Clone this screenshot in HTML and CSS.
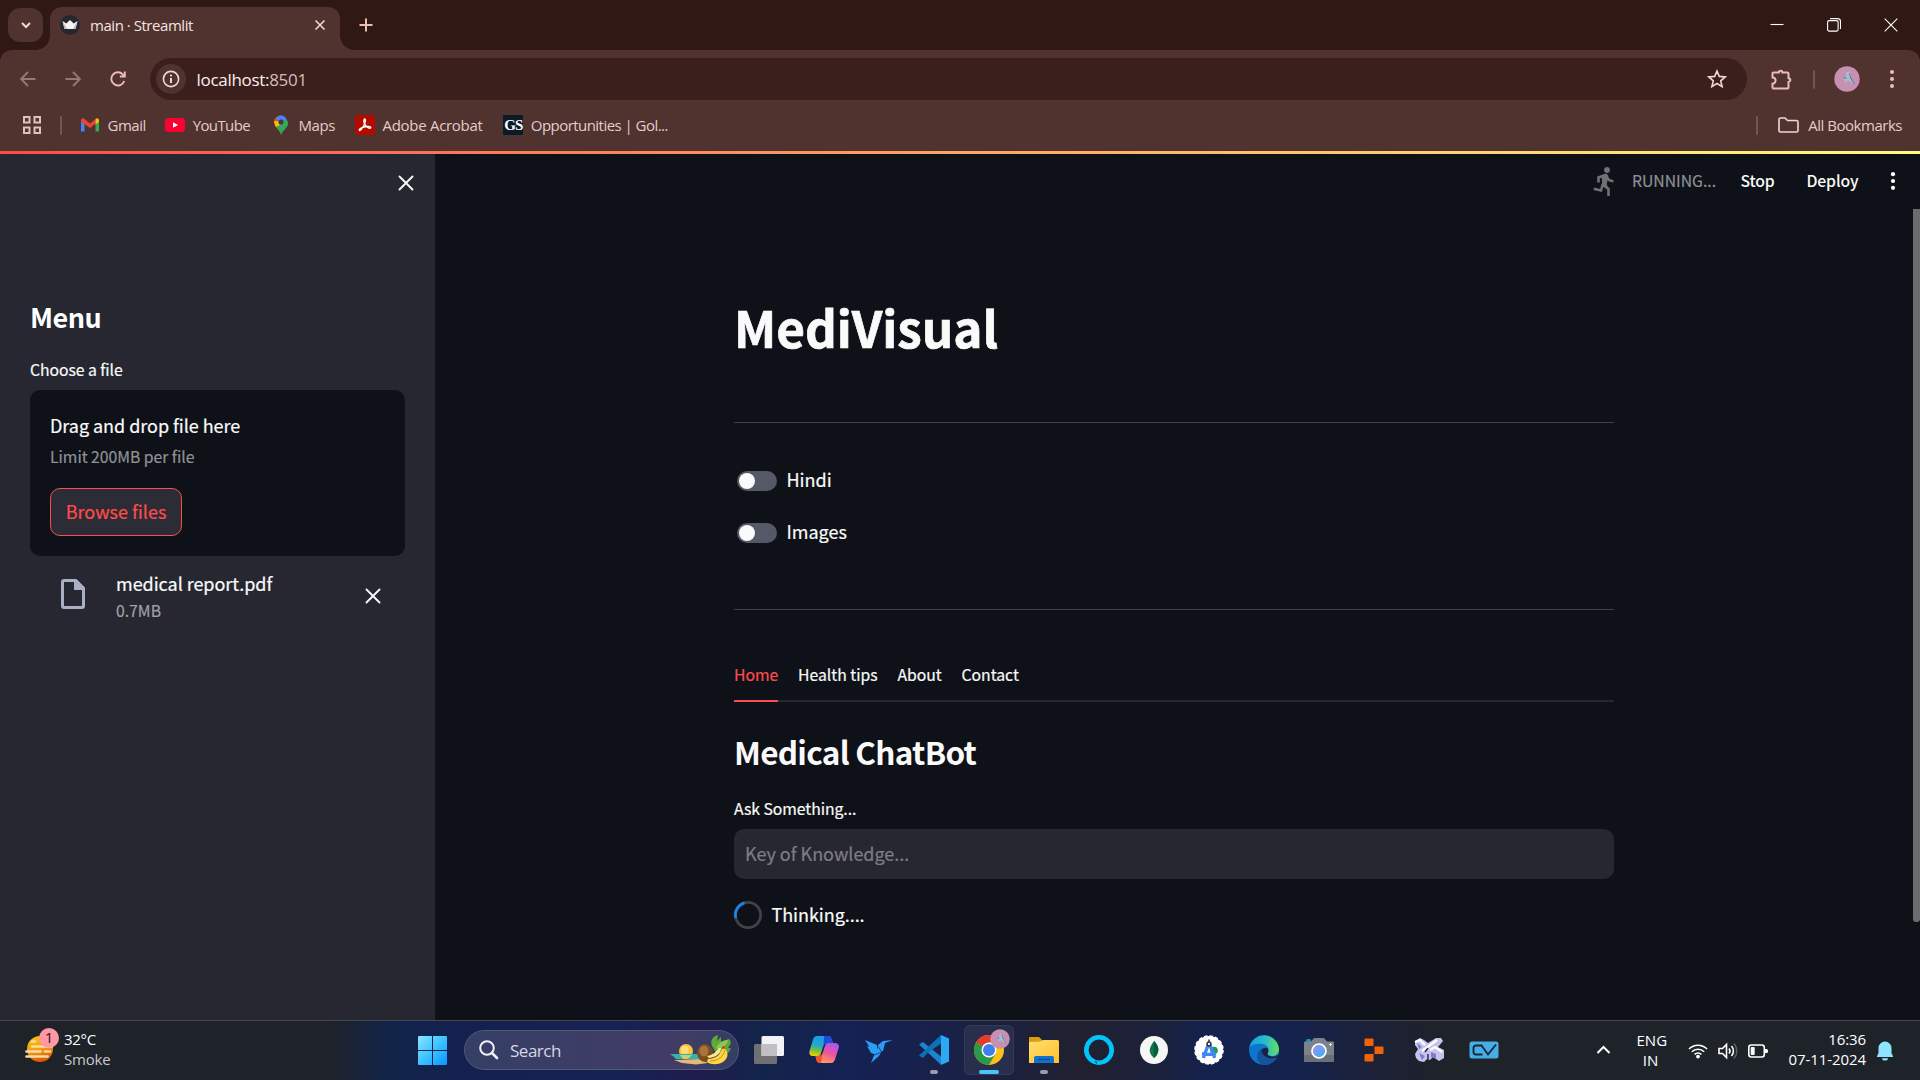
FILE: index.html
```html
<!DOCTYPE html>
<html lang="en">
<head>
<meta charset="utf-8">
<title>main · Streamlit</title>
<link rel="stylesheet" href="styles.css">
</head>
<body>
<header class="browser">
  <div class="tabstrip">
    <button class="tab-search"><svg width="12" height="12" viewBox="0 0 12 12"><path d="M2 4l4 4 4-4" class="ln-light w2"/></svg></button>
    <div class="tab">
      <svg class="favicon" width="20" height="20" viewBox="0 0 20 20"><circle cx="10" cy="10" r="10" fill="#262730"/><path d="M2.500 6l3.800 2.600L10 5l3.700 3.600L17.500 6l-2 8h-11z" fill="#f4f4f4"/><path d="M2.500 6l4.500 8H4.500z M17.500 6L13 14h2.500z" fill="#bbb"/></svg>
      <span class="tab-title">main · Streamlit</span>
      <svg class="tab-close" width="12" height="12" viewBox="0 0 12 12"><path d="M1.500 1.500l9 9m0-9l-9 9" class="ln-light w15"/></svg>
    </div>
    <svg class="new-tab" width="14" height="14" viewBox="0 0 14 14"><path d="M7 .5v13M.5 7h13" class="ln-pink w2"/></svg>
    <div class="window-controls">
      <svg width="14" height="14" viewBox="0 0 14 14"><path d="M.5 6.500h13" class="ln-white w1"/></svg>
      <svg width="14" height="14" viewBox="0 0 14 14"><rect x=".6" y="2.600" width="10.500" height="10.500" rx="1.500" class="ln-white w1"/><path d="M3 .6h7.500a3 3 0 0 1 3 3V11" class="ln-white w1"/></svg>
      <svg width="14" height="14" viewBox="0 0 14 14"><path d="M.7.7l12.600 12.600m0-12.600L.7 13.300" class="ln-white w1"/></svg>
    </div>
  </div>
  <div class="toolbar">
    <svg class="nav dim" width="16" height="16" viewBox="0 0 16 16"><path d="M15.500 8H1.500M8 1L1 8l7 7" /></svg>
    <svg class="nav dim" width="16" height="16" viewBox="0 0 16 16"><path d="M.5 8h14M8 1l7 7-7 7"/></svg>
    <svg class="nav" width="16" height="16" viewBox="0 0 16 16"><path d="M14.200 10A6.600 6.600 0 1 1 12.800 3.400L14.500 5.200M14.800.5v5h-5"/></svg>
    <div class="omnibox">
      <span class="site-info"><svg width="18" height="18" viewBox="0 0 18 18"><circle cx="9" cy="9" r="7.600" class="ln-light w15"/><path d="M9 8v5" class="ln-light w2"/><circle cx="9" cy="5.500" r="1.100" fill="#ecdad7"/></svg></span>
      <span class="url">localhost:<i>8501</i></span>
      <svg class="star" width="20" height="20" viewBox="0 0 20 20"><path d="M10 2l2.300 5.400 5.900.5-4.500 3.900 1.400 5.800L10 14.500l-5.100 3.100 1.400-5.800L1.800 7.900l5.900-.5z" class="ln-light w15"/></svg>
    </div>
    <svg class="puzzle" width="21" height="21" viewBox="0 0 21 21"><path d="M3.500 3.500H7.800A1.800 1.800 0 0 1 11.400 3.500H16.500a1 1 0 0 1 1 1V9.300A1.800 1.800 0 0 1 17.500 12.900V18.500a1 1 0 0 1-1 1H2.500a1 1 0 0 1-1-1V14.700A3 3 0 0 0 1.500 8.500V4.500a1 1 0 0 1 1-1z" class="ln-pink w2"/></svg>
    <span class="divider thin"></span>
    <svg class="avatar" width="26" height="26" viewBox="0 0 26 26"><use href="#unicorn"/></svg>
    <svg class="kebab" width="4" height="18" viewBox="0 0 4 18"><g fill="#ecbdb6"><circle cx="2" cy="2" r="2"/><circle cx="2" cy="9" r="2"/><circle cx="2" cy="16" r="2"/></g></svg>
  </div>
  <nav class="bookmarks">
    <svg class="apps" width="18" height="18" viewBox="0 0 18 18"><path d="M1 1h5.500v5.500H1zM11.500 1H17v5.500h-5.500zM1 11.500h5.500V17H1zM11.500 11.500H17V17h-5.500z" class="ln-tan w2"/></svg>
    <span class="divider"></span>
    <a class="bm w38"><svg width="20" height="20" viewBox="0 0 20 20"><path d="M1 5v11.500h3.500V8z" fill="#4285f4"/><path d="M19 5v11.500h-3.500V8z" fill="#34a853"/><path d="M1 5.500A2 2 0 0 1 4.500 4L10 8.500 15.500 4v4.700L10 13 1 6.500z" fill="#ea4335"/><path d="M15.500 4A2 2 0 0 1 19 5.500V7l-3.500 2.500z" fill="#fbbc04"/></svg><span>Gmail</span></a>
    <a class="bm w58"><svg width="20" height="20" viewBox="0 0 20 20"><rect y="3" width="20" height="14" rx="3.500" fill="#ff0033"/><path d="M8 7.200v5.600l5-2.800z" fill="#fff"/></svg><span>YouTube</span></a>
    <a class="bm w36"><svg width="20" height="20" viewBox="0 0 20 20"><path d="M10 20c-1-4-3-5-5-8l9-9c4 3 4 7 1 10-2 2.500-4 4-5 7z" fill="#34a853"/><path d="M5 12C3 9 2.500 6.500 4 4l4.500 3z" fill="#fbbc04"/><path d="M3.500 4.500A7 7 0 0 1 12 .8L7.500 6.500z" fill="#ea4335"/><path d="M8 .8a7 7 0 0 1 7.500 3.200L9 11 4 4z" fill="#4285f4"/><path d="M3.300 6a7 7 0 0 1 .9-2.700l4 3.500z" fill="#ea4335"/><path d="M3.300 6.500l4-.5 1.500 4L5 12z" fill="#fbbc04"/><circle cx="10" cy="7" r="2.500" fill="#50322f"/></svg><span>Maps</span></a>
    <a class="bm w100"><svg width="20" height="20" viewBox="0 0 20 20"><rect width="20" height="20" rx="3" fill="#b30b00"/><path d="M9.500 4c1.800 0 .8 4-1 7-1 2-2.500 4.500-4 4.500-1.500-1.500 4-4 9-4 4 .2 2 2.500 0 1.500-3-1.500-6-6.500-4-9z" fill="none" stroke="#fff" stroke-width="1.300"/></svg><span>Adobe Acrobat</span></a>
    <a class="bm w137"><b class="gs">GS</b><span>Opportunities | Gol...</span></a>
    <span class="divider end"></span>
    <a class="all"><svg width="21" height="16" viewBox="0 0 21 16"><path d="M1 2.500A1.500 1.500 0 0 1 2.500 1H7l2.500 2.500h9A1.500 1.500 0 0 1 20 5v8.500a1.500 1.500 0 0 1-1.500 1.500h-16A1.500 1.500 0 0 1 1 13.500z" class="ln-light w15"/></svg><span>All Bookmarks</span></a>
  </nav>
</header>
<div class="decoration"></div>

<div class="app">
  <aside class="sidebar">
    <svg class="x side-close" width="16" height="16" viewBox="0 0 16 16"><path d="M1.500 1.500l13 13m0-13l-13 13"/></svg>
    <h2 class="menu-title">Menu</h2>
    <label class="choose">Choose a file</label>
    <section class="dropzone">
      <p class="drag">Drag and drop file here</p>
      <p class="limit">Limit 200MB per file</p>
      <button class="browse">Browse files</button>
    </section>
    <div class="file">
      <svg class="doc" width="24" height="30" viewBox="0 0 24 30"><path d="M3 0H15.500L24 8.500V27a3 3 0 0 1-3 3H3a3 3 0 0 1-3-3V3a3 3 0 0 1 3-3zM3 3V27H21V11H13V3z" fill="#aab0c4" fill-rule="evenodd"/></svg>
      <div class="file-text"><p class="name">medical report.pdf</p><p class="size">0.7MB</p></div>
      <svg class="x" width="16" height="16" viewBox="0 0 16 16"><path d="M1.500 1.500l13 13m0-13l-13 13"/></svg>
    </div>
  </aside>

  <main class="main">
    <div class="app-header">
      <svg class="runner" width="22" height="30" viewBox="0 0 22 30"><circle cx="14" cy="3" r="2.900" fill="#707176"/><path d="M12.500 8L5.500 10.500V15.500M12.500 8L10 18l5.500 4V29M13.500 9.500c1 3 3 4.500 7 4.700M9.800 17L8 23.500.8 21.800" fill="none" stroke="#707176" stroke-width="2.600"/><path d="M8.500 8.500l5-2 2 2.500-1.800 8 1.300 3.500-5.500-2z" fill="#707176"/></svg>
      <span class="running">RUNNING...</span>
      <span class="stop">Stop</span>
      <span class="deploy">Deploy</span>
      <svg class="dots" width="6" height="18" viewBox="0 0 6 18"><g fill="#fff"><circle cx="3" cy="2.200" r="2.100"/><circle cx="3" cy="9" r="2.100"/><circle cx="3" cy="15.800" r="2.100"/></g></svg>
    </div>
    <div class="content">
      <h1>MediVisual</h1>
      <hr class="hr1">
      <div class="toggle-row"><span class="toggle"></span><span class="tl">Hindi</span></div>
      <div class="toggle-row second"><span class="toggle"></span><span class="tl">Images</span></div>
      <hr class="hr2">
      <div class="tabs"><span class="active">Home</span><span>Health tips</span><span>About</span><span>Contact</span></div>
      <h2 class="chat">Medical ChatBot</h2>
      <label class="ask">Ask Something...</label>
      <div class="input">Key of Knowledge...</div>
      <div class="spin-row"><svg width="28" height="28" viewBox="0 0 28 28"><circle cx="14" cy="14" r="12.600" fill="none" stroke="#404247" stroke-width="2.800"/><path d="M1.700 17A12.600 12.600 0 0 1 10.500 1.900" fill="none" stroke="#1c83e1" stroke-width="2.800"/></svg><span>Thinking....</span></div>
    </div>
    <div class="scrollbar"></div>
  </main>
</div>

<footer class="taskbar">
  <div class="weather">
    <svg width="36" height="38" viewBox="0 0 36 38"><defs><linearGradient id="sun" x1="0" y1="0" x2=".3" y2="1"><stop offset="0" stop-color="#ffc800"/><stop offset=".6" stop-color="#f59a10"/><stop offset="1" stop-color="#e05a00"/></linearGradient></defs><circle cx="15" cy="22" r="13" fill="url(#sun)"/><path d="M7 14.500h3M7 19.500h20M1.500 24.500h14M20 24.500h5M1.500 29.500h21" stroke="#f3dca6" stroke-width="2.700" stroke-linecap="round"/><circle cx="24" cy="11" r="10" fill="#ff98a2"/><text x="24" y="16" text-anchor="middle" class="badge">1</text></svg>
    <div class="wx"><p>32°C</p><p class="smoke">Smoke</p></div>
  </div>
  <div class="dock">
    <svg class="start" width="29" height="29" viewBox="0 0 29 29"><defs><linearGradient id="win" x1="0" y1="0" x2="1" y2="1"><stop offset="0" stop-color="#8ae4ff"/><stop offset=".5" stop-color="#3cc4ff"/><stop offset="1" stop-color="#0a95ff"/></linearGradient></defs><path d="M1 0h13v14H0V1a1 1 0 0 1 1-1zM15 0h13a1 1 0 0 1 1 1v13H15zM0 15h14v14H1a1 1 0 0 1-1-1zM15 15h14v13a1 1 0 0 1-1 1H15z" fill="url(#win)"/></svg>
    <div class="search">
      <svg width="20" height="20" viewBox="0 0 20 20"><circle cx="8" cy="8" r="6.800" fill="none" stroke="#f2f2f6" stroke-width="2"/><path d="M13 13l5 5" stroke="#f2f2f6" stroke-width="2.600" stroke-linecap="round"/></svg>
      <span>Search</span>
      <svg class="fruit" width="62" height="30" viewBox="0 0 62 30"><circle cx="16" cy="16" r="7" fill="#ffc23c"/><circle cx="15" cy="15" r="4" fill="#ffe07a"/><path d="M0 19h30v5H6l-2-2z" fill="#33b3ad"/><path d="M10 20h12l-4 4h-5z" fill="#c9d07a"/><path d="M4 25l26-1 8 4-12 1.500-14-1.500z" fill="#e5b878"/><path d="M42 11c-2-5 0-9 6-11l-1 6 4-4 0 5 8-3c3 3 2 6-1 8l3 2-3 4H46z" fill="#5fa83a"/><path d="M46 13c2-5 7-8 12-8-1 5-5 8-9 10z" fill="#8dc74f"/><ellipse cx="35" cy="18" rx="8" ry="9" fill="#7a4c20"/><ellipse cx="34" cy="16" rx="4.500" ry="5.500" fill="#a8743a"/><path d="M53 12c6 4 6 11 0 15-5 3-12 3-16 0l1-3c8 0 13-5 15-12z" fill="#ffd64a"/><path d="M51 13c0 5-4 9-12 10l-2-2c6-1 9-4 12-8z" fill="#ffe98a"/><path d="M40 26c8 0 13-4 15-11" fill="none" stroke="#c98a1a" stroke-width="1"/><circle cx="53.500" cy="12.500" r="1.500" fill="#d0342c"/></svg>
    </div>
    <div class="icons">
      <span class="slot"><svg width="30" height="30" viewBox="0 0 30 30"><rect x="0" y="9" width="23" height="20" rx="1.500" fill="#707073"/><rect x="7.500" y="1" width="22.500" height="20" rx="1.500" fill="#f2f2f2"/><rect x="7.500" y="9" width="15.500" height="12" fill="#bfbfc4"/></svg></span>
      <span class="slot"><svg width="30" height="30" viewBox="0 0 30 30"><defs><linearGradient id="cp1" x1=".4" y1="0" x2=".2" y2="1"><stop offset="0" stop-color="#1a9bf0"/><stop offset=".45" stop-color="#22a7c9"/><stop offset=".7" stop-color="#6cc04a"/><stop offset="1" stop-color="#f4d000"/></linearGradient><linearGradient id="cp2" x1=".7" y1="0" x2=".3" y2="1"><stop offset="0" stop-color="#a955f0"/><stop offset=".5" stop-color="#f0569a"/><stop offset="1" stop-color="#ffa05a"/></linearGradient></defs><path d="M8 1h11c2 0 3 1 3.500 3L24 8h-5c-3 0-4 1-5 4l-2 6c-1 3-2 3-4 3H4c-3 0-4-2-3.500-5L4 4.500C5 2 6 1 8 1z" fill="url(#cp1)"/><path d="M15 1h4.500c2 0 2.500 1 3 3L24 8h-5c-2.500 0-3.500.8-4.500 3z" fill="#1b4fd8"/><path d="M22 28H11c-2 0-3-1-3.500-3L6.500 21H9c3 0 4-1 5-4l2-6c1-3 2-3 4-3h6c3 0 4.500 2 3.700 5L26 24.500C25 27 24 28 22 28z" fill="url(#cp2)"/><path d="M6.500 21H9c2.500 0 4-.8 5-3.500L12 28h-1c-2 0-3-1-3.500-3z" fill="#f0542c"/></svg></span>
      <span class="slot"><svg width="30" height="30" viewBox="0 0 30 30"><g fill="#2a9df4"><path d="M1 5l12 5 1 6L6 13z"/><path d="M14 10l5-4 10-1-8 3-2 8-5 2z"/><path d="M3 11l15 5-3 5-8-3z"/><path d="M11 18l4 3-8 7z"/></g><path d="M13 10l5 7-8 3" fill="none" stroke="#17326a" stroke-width=".8"/></svg></span>
      <span class="slot run"><svg width="30" height="30" viewBox="0 0 30 30"><path d="M4 7L0 9.500 18 26l4 4v-8.500z" fill="#1a86d2"/><path d="M22 8.500L9 17.500 4 23 0 20.500 22 0z" fill="#0b71bb"/><path d="M22 0l8 3.500v23L22 30z" fill="#2ba9f5"/></svg></span>
      <span class="slot active-app"><svg width="30" height="30" viewBox="0 0 30 30"><circle cx="15" cy="15" r="15" fill="#fbc116"/><path d="M15 15L2 7.500A15 15 0 0 1 28 7.500H15z" fill="#e33b2e"/><path d="M2 7.500A15 15 0 0 0 15 30l6.500-11.300L15 15z" fill="#2a9a48"/><circle cx="15" cy="15" r="7.500" fill="#fff"/><circle cx="15" cy="15" r="6" fill="#3b7ff0"/></svg><svg class="mini" width="20" height="20" viewBox="0 0 26 26"><g id="unicorn"><circle cx="13" cy="13" r="12.700" fill="#c890b0"/><path d="M12 6.500l3.500-1 1.500 2.500-1 3.500 3 3 1.500 4-3.500-2-2.500-2-2 1-2 2 .5-3.500-2-1 3-1.500z" fill="#a9bccf"/><path d="M15.500 7l1 4.500 4 6.500M9.500 11.500l3 1" fill="none" stroke="#4c83a8" stroke-width="1.100"/></g></svg></span>
      <span class="slot run"><svg width="30" height="28" viewBox="0 0 30 28"><defs><linearGradient id="fold" x1="0" y1="0" x2="1" y2="1"><stop offset="0" stop-color="#ffdf70"/><stop offset="1" stop-color="#ffc02c"/></linearGradient></defs><path d="M1 1h9l3 3v4H0V2a1 1 0 0 1 1-1z" fill="#dd9d0c"/><path d="M11 5.500l3-1.500h14.500A1.500 1.500 0 0 1 30 5.500V27H0V6z" fill="url(#fold)"/><path d="M5 27v-5a2 2 0 0 1 2-2h16a2 2 0 0 1 2 2v5z" fill="#0f72cb"/><path d="M9 23.500h12" stroke="#0a4d93" stroke-width="1.300"/></svg></span>
      <span class="slot"><svg width="30" height="30" viewBox="0 0 30 30"><circle cx="15" cy="15" r="12.700" fill="none" stroke="#00c4fb" stroke-width="4.600"/><path d="M12.500 26v4l5.500-3z" fill="#00c4fb"/><path d="M11 26l1.500.3.300 3.500z" fill="#1a2045"/></svg></span>
      <span class="slot"><svg width="28" height="28" viewBox="0 0 28 28"><circle cx="14" cy="14" r="14" fill="#f6f6f4"/><path d="M14 5c4 4 5 8 4 11-1 3-2 4-4 6-2-2-4-4-4.300-7C9.500 11 12 8 14 5z" fill="#10754a"/><path d="M14 5c4 4 5 8 4 11-1 3-2 4-4 6z" fill="#0a5c3c"/></svg></span>
      <span class="slot"><svg width="30" height="30" viewBox="0 0 30 30"><circle cx="15" cy="15" r="14" fill="#fff"/><circle cx="15" cy="15" r="14" fill="none" stroke="#fff" stroke-width="1.600" stroke-dasharray="3.500 2"/><circle cx="20" cy="15.500" r="3.800" fill="#1f9c50"/><path d="M14.500 9L9.300 23M15.500 9l5.200 14M8 18.800q7 1.200 14 0" fill="none" stroke="#4285f4" stroke-width="3.400"/><circle cx="15" cy="9" r="1.900" fill="#fff" stroke="#333" stroke-width="1.500"/><path d="M15 4.500v3" stroke="#333" stroke-width="1.500"/></svg></span>
      <span class="slot"><svg width="30" height="30" viewBox="0 0 30 30"><defs><linearGradient id="e1"><stop offset="0" stop-color="#1a9fe0"/><stop offset=".5" stop-color="#28b9cf"/><stop offset="1" stop-color="#62e05a"/></linearGradient></defs><circle cx="15" cy="15" r="15" fill="#0c76cf"/><path d="M.5 12A15 15 0 0 1 30 14c.3 4-3 7-7 7-3 0-5-1-4.500-3 2-3 1-8-5-9C8 8 3 9 .5 12z" fill="url(#e1)"/><path d="M28 22.500A15 15 0 0 1 13 29.800C8 27 7 22 9 17.500c1.500-3 4-4.500 6.500-4.500-3 4-1 9.500 4.500 10.500 3 .7 5.500 0 8-1z" fill="#14549c"/><path d="M12.500 16c1-3 4-4 6-3 1.500 2 1 4 .2 5.500-.7 2 2 3 5.300 3 2.500 0 3.500-.7 4.500-1.500l.5 1.500c-5 4-15 2-16.500-5.500z" fill="#1a2143"/></svg></span>
      <span class="slot"><svg width="30" height="26" viewBox="0 0 30 26"><rect x="2" y="2" width="5" height="4" rx="1.500" fill="#1791d6"/><path d="M1 4.500h6L10 1h10l3 3.500h6a1 1 0 0 1 1 1V24a1 1 0 0 1-1 1H1a1 1 0 0 1-1-1V5.500a1 1 0 0 1 1-1z" fill="#7c8288"/><path d="M0 18h30v6a1 1 0 0 1-1 1H1a1 1 0 0 1-1-1z" fill="#6b7076"/><defs><linearGradient id="lens" x1="0" y1="0" x2=".6" y2="1"><stop offset="0" stop-color="#b58af2"/><stop offset="1" stop-color="#3bb0f5"/></linearGradient></defs><circle cx="15" cy="14" r="7" fill="url(#lens)" stroke="#fff" stroke-width="1.700"/><path d="M26.500 6v3M25 7.500h3" stroke="#dfe3e6" stroke-width="1"/></svg></span>
      <span class="slot"><svg width="20" height="24" viewBox="0 0 20 24"><path d="M1.500.5h7a1 1 0 0 1 1 1V8h-8a1 1 0 0 1-1-1V1.500a1 1 0 0 1 1-1zM10.500 8.500h8a1 1 0 0 1 1 1V15a1 1 0 0 1-1 1h-8zM1.500 16h8v6.500a1 1 0 0 1-1 1h-7a1 1 0 0 1-1-1V17a1 1 0 0 1 1-1z" fill="#f26207"/></svg></span>
      <span class="slot"><svg width="30" height="26" viewBox="0 0 30 26"><path d="M1 4l5-3 4 2 4 3 8-5h5l2 3-5 6 6 3v8l-5 3-6-4-3 3-3-1-3 3-5-1-3-3-1-4 3-5-3-4z" fill="#c5c4ec"/><path d="M1 5l5-2 5 5M8 14L23 3M16 13l5-3 7 5" fill="none" stroke="#fff" stroke-width="2.200"/><path d="M3 6l5 4-3 2zM17 15l5 2v5l-5-2zM5 16l6 3-3 4z" fill="#7f7cd0"/><path d="M14 11l-3 4M14 17v5" stroke="#2c2a4c" stroke-width="1.500"/></svg></span>
      <span class="slot"><svg width="30" height="18" viewBox="0 0 30 18"><rect x=".5" y=".5" width="29" height="17" rx="2.500" fill="#46ade6"/><path d="M13.500 4.500H7a2.500 2.500 0 0 0-2.500 2.500v4A2.500 2.500 0 0 0 7 13.500h6.500M12.500 4.500l6.500 9L27 3.500" fill="none" stroke="#14283a" stroke-width="1.900"/></svg></span>
    </div>
  </div>
  <div class="tray">
    <svg class="chev" width="15" height="10" viewBox="0 0 15 10"><path d="M1.500 8L7.500 2l6 6" class="ln-white w2"/></svg>
    <div class="lang"><p>ENG</p><p>IN</p></div>
    <svg class="wifi" width="20" height="16" viewBox="0 0 20 16"><path d="M1 6a12.700 12.700 0 0 1 18 0M3.800 8.800a8.800 8.800 0 0 1 12.400 0M6.600 11.400a5 5 0 0 1 6.800 0" class="ln-white w15"/><circle cx="10" cy="13.600" r="1.900" fill="#fff"/></svg>
    <svg class="vol" width="21" height="18" viewBox="0 0 21 18"><path d="M1 6.500h3.500L8.500 2.500v13L4.500 11.500H1z" class="ln-white w15"/><path d="M11 6.500a4 4 0 0 1 0 5M13.500 4a7.500 7.500 0 0 1 0 10" class="ln-white w15"/><path d="M16 1.500a11.500 11.500 0 0 1 0 15" fill="none" stroke="#5b5f66" stroke-width="1.500"/></svg>
    <svg class="bat" width="20" height="14" viewBox="0 0 20 14"><rect x=".8" y="1" width="15.500" height="12" rx="2.500" class="ln-white w15"/><rect x="2.700" y="3" width="4" height="8" rx="1" fill="#fff"/><path d="M17 5h1.500a1.500 1.500 0 0 1 1.500 1.500v1A1.500 1.500 0 0 1 18.500 9H17z" fill="#fff"/></svg>
    <div class="clock"><p>16:36</p><p>07-11-2024</p></div>
    <svg class="bell" width="16" height="20" viewBox="0 0 16 20"><path d="M8 .5a6.500 6.500 0 0 1 6.500 6.500v5l1.500 3.200v.8H0v-.8L1.500 12V7A6.500 6.500 0 0 1 8 .5zM5 17.200h6a3 2.300 0 0 1-6 0z" fill="#8fe3ff"/></svg>
  </div>
</footer>
</body>
</html>
```
FILE: styles.css
```css
* { box-sizing: border-box; }
body { margin: 0; width: 1920px; height: 1080px; overflow: hidden; background: #0e1117; color: #fafafa; font-family: "Noto Sans CJK JP", sans-serif; font-size: 18px; }
p, h1, h2 { margin: 0; }
svg { display: block; flex: none; }
button { padding: 0; border: 0; font: inherit; }
[class*="ln-"] { fill: none; }
.ln-light { stroke: #ecdad7; }
.ln-pink { stroke: #ecbdb6; }
.ln-tan { stroke: #dcc3be; }
.ln-white { stroke: #fff; }
.w1 { stroke-width: 1.1; }
.w15 { stroke-width: 1.6; }
.w2 { stroke-width: 2; }

/* Browser chrome */
.browser { height: 151px; background: linear-gradient(#301814 60px, #50322f 60px); font-family: "Open Sans", sans-serif; font-size: 15px; color: #e3cdc9; }
.tabstrip { height: 50px; display: flex; padding-left: 8px; }
.tab-search { width: 35px; height: 34px; margin-top: 8px; border-radius: 12px; background: #50322f; display: flex; align-items: center; justify-content: center; }
.tab { position: relative; width: 290px; height: 43px; margin: 7px 0 0 7px; padding: 0 14px 7px 10px; border-radius: 12px 12px 0 0; background: #50322f; display: flex; align-items: center; }
.tab::before, .tab::after { content: ""; position: absolute; bottom: 0; width: 14px; height: 14px; }
.tab::before { left: -14px; background: radial-gradient(circle at 0 0, transparent 13.5px, #50322f 14px); }
.tab::after { right: -14px; background: radial-gradient(circle at 100% 0, transparent 13.5px, #50322f 14px); }
.tab-title { margin: 0 auto 0 10px; color: #f3e3e0; letter-spacing: -0.46px; }
.new-tab { margin: 18px 0 0 18.5px; }
.window-controls { display: flex; gap: 43px; margin: 18px 22px 0 auto; }
.toolbar { height: 58px; border-radius: 12px 12px 0 0; background: #50322f; display: flex; align-items: center; padding: 0 26px 0 20px; }
.nav { fill: none; stroke: #ecbdb6; stroke-width: 1.9; margin-right: 29px; }
.dim { stroke: #937974; }
.nav:nth-child(3) { margin-right: 24px; }
.omnibox { width: 1597px; height: 42px; border-radius: 21px; background: #3a1f1c; display: flex; align-items: center; padding: 0 20px 0 6px; }
.site-info { width: 30px; height: 30px; border-radius: 50%; background: #50322f; display: flex; align-items: center; justify-content: center; }
.url { margin: 0 auto 0 10.5px; font-size: 17px; letter-spacing: -0.3px; color: #fff0ee; }
.url i { font-style: normal; color: #d3bdb9; }
.puzzle { margin-left: 24px; }
.divider { width: 2px; height: 19px; border-radius: 1px; background: #755550; }
.thin { margin-left: 21px; }
.avatar { margin-left: 19px; }
.kebab { margin-left: 30.5px; }
.bookmarks { height: 35px; display: flex; align-items: center; padding: 0 18px 1px 23px; }
.bookmarks .divider { margin: 0 18px 0 19px; }
.bm { display: flex; align-items: center; gap: 7.5px; margin-right: 20.7px; white-space: nowrap; }
.w38 span { width: 37px; letter-spacing: -0.5px; }
.w58 span { width: 57.5px; letter-spacing: -0.62px; }
.w36 span { width: 36px; letter-spacing: -0.35px; }
.w100 span { width: 100px; letter-spacing: -0.3px; }
.w137 span { letter-spacing: -0.54px; }
.gs { width: 20px; height: 20px; background: #0b1a26; color: #fff; font: 700 15px/20px "Liberation Serif", serif; text-align: center; letter-spacing: -1px; }
.bookmarks .end { margin: 0 20px 0 auto; }
.all { display: flex; align-items: center; gap: 9.5px; letter-spacing: -0.48px; }
.decoration { height: 3px; background: linear-gradient(90deg, #ff4b4b, #fffd80); }

/* Application */
.app { height: 866px; display: flex; -webkit-text-stroke: 0.2px; }
.sidebar { width: 435px; padding: 21px 30px 0; background: #262730; }
.x { fill: none; stroke: #fafafa; stroke-width: 1.9; stroke-linecap: round; }
.side-close { margin: 0 -8.5px 0 auto; }
.menu-title { margin-top: 108px; font: 600 27px/36px "Noto Sans CJK JP", sans-serif; letter-spacing: -0.5px; color: #fff; -webkit-text-stroke: 0; }
.choose { display: block; margin-top: 24px; font-size: 15.75px; line-height: 22px; letter-spacing: -0.05px; }
.dropzone { width: 375px; height: 166px; margin-top: 9px; padding: 23px 20px 0; border-radius: 10px; background: #0e1117; }
.drag { line-height: 24px; letter-spacing: -0.04px; }
.limit { margin-top: 9px; font-size: 15.75px; line-height: 22px; letter-spacing: -0.03px; color: #909195; }
.browse { display: block; width: 132px; height: 48px; margin-top: 20px; padding-bottom: 2px; border: 1px solid #ff4b4b; border-radius: 10px; background: #2b2c36; color: #ff4b4b; }
.file { display: flex; padding: 15px 24.5px 0 31px; }
.doc { margin-top: 8px; }
.file-text { margin: 0 auto 0 31px; }
.name { line-height: 24px; letter-spacing: -0.04px; }
.size { margin-top: 6px; font-size: 15.75px; line-height: 20px; color: #a0a1a6; }
.file .x { margin-top: 16.5px; }
.main { position: relative; flex: 1; background: #0e1117; }
.app-header { height: 52px; display: flex; align-items: center; justify-content: flex-end; padding-right: 24.5px; font-size: 15.75px; }
.runner { margin: 4px 16.5px 0 0; }
.running { color: #8d9096; width: 84px; margin: 1px 24.5px 0 0; }
.stop { margin-right: 32px; font-weight: 500; letter-spacing: -0.2px; }
.deploy { margin: 1px 31px 0 0; font-weight: 500; letter-spacing: -0.1px; }
.stop, .deploy { -webkit-text-stroke: 0; }
.dots { margin-top: 2px; }
.content { width: 880px; margin-left: 299px; padding-top: 88px; }
h1 { font-size: 49.5px; line-height: 66px; font-weight: 700; letter-spacing: -0.05px; -webkit-text-stroke: 0.7px; }
hr { height: 1px; margin: 0; border: 0; background: #3e4044; }
.hr1 { margin-top: 62px; }
.toggle-row { height: 30px; margin-top: 43px; padding-left: 3px; display: flex; align-items: center; gap: 9.5px; }
.toggle-row.second { margin-top: 22px; }
.toggle { width: 40px; height: 20px; padding: 2px; border-radius: 10px; background: #555867; }
.toggle::before { content: ""; display: block; width: 16px; height: 16px; border-radius: 50%; background: #fafafa; }
.tl { margin-bottom: 5px; }
.hr2 { margin-top: 61px; }
.tabs { height: 53px; margin-top: 39px; border-bottom: 2px solid #262730; display: flex; gap: 19.7px; font-size: 15.75px; line-height: 52px; }
.tabs span { height: 53px; }
.tabs .active { color: #ff4b4b; border-bottom: 2px solid #ff4b4b; }
.chat { margin-top: 28px; font-size: 31.5px; line-height: 42px; font-weight: 700; letter-spacing: -0.7px; white-space: nowrap; -webkit-text-stroke: 0; }
.ask { display: block; margin-top: 26px; font-size: 15.75px; line-height: 22px; letter-spacing: -0.05px; }
.input { height: 50px; margin-top: 9px; padding-left: 11px; border-radius: 10px; background: #262730; color: #7d7e83; line-height: 48px; letter-spacing: -0.03px; }
.spin-row { height: 30px; margin-top: 21px; display: flex; align-items: center; gap: 9.5px; }
.spin-row span { margin-bottom: 2px; letter-spacing: -0.05px; }
.scrollbar { position: absolute; right: 0; top: 55px; width: 7px; height: 713px; background: #6b6c70; border-radius: 0 0 3px 3px; }

/* Taskbar */
.taskbar { height: 60px; border-top: 1px solid #43464d; display: flex; font-family: "Open Sans", sans-serif; font-size: 15px; color: #fff; background: linear-gradient(90deg, #1e2229 330px, #12244a 390px, #14214f 460px, #152254 620px, #201c4c 700px, #13244a 760px, #152154 850px, #1a2147 960px, #20202f 1080px, #1b213c 1160px, #14224e 1210px, #14224e 1290px, #1c2138 1370px, #1e2229 1440px); }
.weather { width: 418px; display: flex; padding: 6px 0 0 25px; gap: 3px; }
.badge { font: 15px "Open Sans", sans-serif; fill: #2b1518; }
.wx p, .lang p, .clock p { line-height: 20px; }
.wx { margin-top: 2px; letter-spacing: -0.3px; }
.wx .smoke { color: #c9cacd; letter-spacing: -0.2px; }
.dock { display: flex; }
.start { margin-top: 15px; }
.search { width: 275px; height: 40px; margin: 9px 0 0 17px; padding: 0 6px 0 14px; border: 1px solid #515878; border-radius: 20px; background: linear-gradient(90deg, #353f66, #413c67 75%, #343e62); display: flex; align-items: center; color: #d5d7e0; font-size: 17px; letter-spacing: -0.48px; }
.search span { margin: 0 auto 0 11px; }
.icons { display: flex; padding-left: 2.5px; }
.slot { position: relative; width: 50px; height: 50px; margin: 4px 2.5px 0; display: flex; align-items: center; justify-content: center; border-radius: 6px; }
.slot.run::after, .active-app::after { content: ""; position: absolute; left: 21px; bottom: 1px; width: 8px; height: 4px; border-radius: 2px; background: #9a9cac; }
.active-app { background: #292e4c; box-shadow: inset 0 0 0 1px #343954; }
.active-app::after { left: 15px; width: 20px; background: #4cc2ff; }
.mini { position: absolute; left: 26px; top: 4px; }
.tray { display: flex; margin-left: auto; padding-right: 27px; align-items: flex-start; }
.chev { margin: 24px 26px 0 0; }
.lang { width: 28px; margin: 9px 23.5px 0 0; text-align: center; }
.wifi { margin: 22px 10px 0 0; }
.vol { margin: 21px 9px 0 0; }
.bat { margin: 23px 19px 0 0; }
.clock { width: 79px; margin: 8px 11px 0 0; text-align: right; letter-spacing: -0.08px; white-space: nowrap; }
.bell { margin-top: 20px; }
```
